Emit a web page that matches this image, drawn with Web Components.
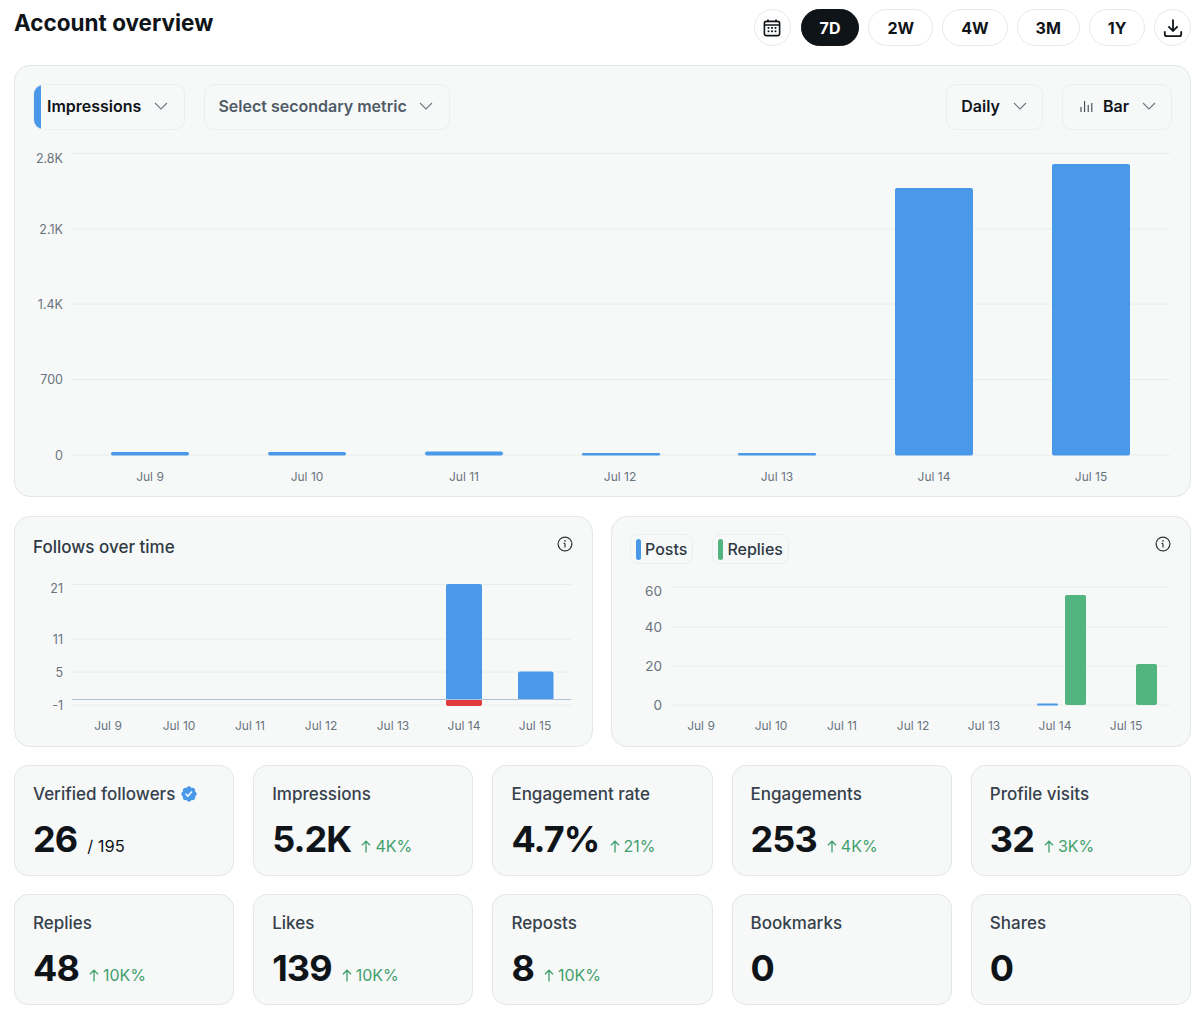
<!doctype html>
<html lang="en">
<head>
<meta charset="utf-8">
<title>Account overview</title>
<style>
  html, body { margin: 0; background: #fff; }
  body { font-family: Inter, "Noto Sans", sans-serif; color: #0f1419; }
</style>
</head>
<body>
<account-overview></account-overview>

<script>
const BLUE = "#4a99e9";
const GREEN = "#52b57f";
const RED = "#e0393e";

const ICONS = {
  calendar: `<svg width="20" height="20" viewBox="0 0 20 20" fill="none" stroke="#0f1419" stroke-width="1.6"><rect x="2.4" y="3.4" width="15.2" height="14.2" rx="2"/><path d="M2.4 7h15.2M6 1.6v2.6M14 1.6v2.6"/><g fill="#0f1419" stroke="none"><rect x="5.6" y="9" width="1.8" height="1.8"/><rect x="9.1" y="9" width="1.8" height="1.8"/><rect x="12.6" y="9" width="1.8" height="1.8"/><rect x="5.6" y="12.4" width="1.8" height="1.8"/><rect x="9.1" y="12.4" width="1.8" height="1.8"/><rect x="12.6" y="12.4" width="1.8" height="1.8"/></g></svg>`,
  download: `<svg width="20" height="20" viewBox="0 0 20 20" fill="none" stroke="#0f1419" stroke-width="1.8"><path d="M10 1.6v11.2M5.4 8.4l4.6 4.6 4.6-4.6M1.8 13.2v3a2 2 0 0 0 2 2h12.4a2 2 0 0 0 2-2v-3"/></svg>`,
  chevron: `<svg width="14" height="8" viewBox="0 0 14 8" fill="none" stroke="#6b7882" stroke-width="1.1"><path d="M1 1l6 6 6-6"/></svg>`,
  bars: `<svg width="13" height="13" viewBox="0 0 13 13" fill="none" stroke="#3a444d" stroke-width="1.1"><path d="M1 7v5M4.6 1v11M8.2 5v7M11.8 3v9"/></svg>`,
  info: `<svg width="16" height="16" viewBox="0 0 16 16" fill="none" stroke="#2f3336" stroke-width="1.2"><circle cx="8" cy="8" r="6.9"/><path d="M8 7.4v4M6.6 7.4H8"/><circle cx="8" cy="4.9" r=".8" fill="#2f3336" stroke="none"/></svg>`,
  verified: `<svg width="18" height="18" viewBox="0 0 24 24"><circle cx="12" cy="12" r="7" fill="#fff"/><path fill="${BLUE}" d="M22.25 12c0-1.43-.88-2.67-2.19-3.34.46-1.39.2-2.9-.81-3.91s-2.52-1.27-3.91-.81c-.66-1.31-1.91-2.19-3.34-2.19s-2.67.88-3.33 2.19c-1.4-.46-2.91-.2-3.92.81s-1.26 2.52-.8 3.91c-1.31.67-2.2 1.91-2.2 3.34s.89 2.67 2.2 3.34c-.46 1.39-.21 2.9.8 3.91s2.52 1.26 3.91.81c.67 1.31 1.91 2.19 3.34 2.19s2.68-.88 3.34-2.19c1.39.45 2.9.2 3.91-.81s1.27-2.52.81-3.91c1.31-.67 2.19-1.91 2.19-3.34zm-11.71 4.2L6.8 12.46l1.41-1.42 2.26 2.26 4.8-5.23 1.47 1.36-6.2 6.77z"/></svg>`,
  up: `<svg width="10" height="13" viewBox="0 0 10 13" fill="none" stroke="currentColor" stroke-width="1.3"><path d="M5 12.5V1.2M1 5.2l4-4 4 4"/></svg>`,
};

// chart geometry is kept in page pixels, the viewBox origin maps it onto the card
// a tick is [label, line y, label y if it sits off the line]
const CHARTS = {
  main: {
    box: [15, 130, 1174, 365], x1: 72, x2: 1170, size: 12.5, yRight: 63,
    ticks: [["2.8K", 153.5, 158], ["2.1K", 229], ["1.4K", 304], ["700", 379.5], ["0", 455]],
    days: [150, 307, 464, 620, 777, 934, 1091], dayY: 481,
    bars: [
      [111, 452, 78, 3.5, BLUE], [268, 452, 78, 3.5, BLUE], [425, 451.5, 78, 4, BLUE],
      [582, 453, 78, 2.5, BLUE], [738, 453, 78, 2.5, BLUE],
      [895, 188, 78, 267.5, BLUE], [1052, 164, 78, 291.5, BLUE],
    ],
  },
  follows: {
    box: [15, 570, 577, 176], x1: 72, x2: 571, size: 12.5, yRight: 63,
    ticks: [["21", 584.5, 588], ["11", 639], ["5", 672], ["-1", 705]],
    days: [108, 179, 250, 321, 393, 464, 535], dayY: 730,
    bars: [[446, 584, 36, 116, BLUE], [518, 671.5, 35.5, 28.5, BLUE], [446, 699.5, 36, 6.5, RED]],
    zero: 699.5,
  },
  activity: {
    box: [612, 570, 578, 176], x1: 672, x2: 1170, size: 13.5, yRight: 662,
    ticks: [["60", 587, 591], ["40", 627], ["20", 666], ["0", 705]],
    days: [701, 771, 842, 913, 984, 1055, 1126], dayY: 730,
    bars: [[1037, 703.5, 21, 2, BLUE], [1065, 595, 21, 110, GREEN], [1136, 664, 21, 41, GREEN]],
  },
};

class BarChart extends HTMLElement {
  constructor() {
    super();
    this.attachShadow({ mode: "open" });
  }
  connectedCallback() {
    const c = CHARTS[this.getAttribute("chart")];
    const [bx, by, bw, bh] = c.box;
    const grid = c.ticks.map(([label, y, labelY]) => `
      <line x1="${c.x1}" x2="${c.x2}" y1="${y}" y2="${y}" stroke="#e9ecec"/>
      <text x="${c.yRight}" y="${(labelY || y) + 4.5}" text-anchor="end">${label}</text>`).join("");
    const days = c.days.map((x, i) =>
      `<text class="day" x="${x}" y="${c.dayY}" text-anchor="middle">Jul ${9 + i}</text>`).join("");
    const bars = c.bars.map(([x, y, w, h, fill]) =>
      `<rect x="${x}" y="${y}" width="${w}" height="${h}" rx="${Math.min(2, h / 2)}" fill="${fill}"/>`).join("");
    const zero = c.zero ? `<line x1="${c.x1}" x2="${c.x2}" y1="${c.zero}" y2="${c.zero}" stroke="#b0c0dc"/>` : "";
    this.shadowRoot.innerHTML = `
      <style>
        :host { display: block; height: ${bh}px; }
        svg { display: block; }
        text { font: 400 ${c.size}px Inter, sans-serif; fill: #68737d; }
        text.day { font-size: 12px; }
      </style>
      <svg width="${bw}" height="${bh}" viewBox="${bx} ${by} ${bw} ${bh}">${grid}${bars}${zero}${days}</svg>`;
  }
}

class RangePill extends HTMLElement {
  constructor() {
    super();
    this.attachShadow({ mode: "open" }).innerHTML = `
      <style>
        :host {
          display: flex; align-items: center; justify-content: center;
          box-sizing: border-box; height: 37px; min-width: 37px; padding: 0 18px;
          border: 1px solid #e6e9ea; border-radius: 19px;
          font-size: 16px; font-weight: 700; color: #0f1419;
        }
        :host([active]) { background: #0f1419; border-color: #0f1419; color: #fff; }
        :host([round]) { padding: 0; width: 37px; }
        ::slotted(svg) { display: block; }
      </style>
      <slot></slot>`;
  }
}

class MetricSelect extends HTMLElement {
  constructor() {
    super();
    this.attachShadow({ mode: "open" }).innerHTML = `
      <style>
        :host {
          display: inline-flex; align-items: center; position: relative; overflow: hidden;
          box-sizing: border-box; height: 46px; padding: 0 15px 2px 14px;
          border: 1px solid #eceff0; border-radius: 10px;
          font-size: 16px; font-weight: 600; color: #0f1419;
        }
        :host([stripe]), :host([muted]) { padding-left: 13px; padding-right: 16px; }
        :host([muted]) { color: #4f5b66; }
        :host([stripe])::before {
          content: ""; position: absolute; left: -1px; top: -1px; bottom: -1px; width: 8px;
          background: ${BLUE};
        }
        .chevron { margin-left: 13px; display: flex; }
        :host([muted]) .chevron { margin-left: 12px; }
        ::slotted(svg) { margin: 0 10px 0 3px; }
      </style>
      <slot></slot><span class="chevron">${ICONS.chevron}</span>`;
  }
}

class LegendChip extends HTMLElement {
  constructor() {
    super();
    this.attachShadow({ mode: "open" }).innerHTML = `
      <style>
        :host {
          display: inline-flex; align-items: center; gap: 4px;
          box-sizing: border-box; height: 30px; padding: 0 5px; margin-top: -1px;
          border: 1px solid #eceff0; border-radius: 8px;
          font-size: 16px; font-weight: 500; color: #2f3a44;
        }
        i { width: 5px; height: 21px; border-radius: 3px; background: var(--chip); }
      </style>
      <i></i><slot></slot>`;
  }
}

class ChartCard extends HTMLElement {
  constructor() {
    super();
    this.attachShadow({ mode: "open" }).innerHTML = `
      <style>
        :host {
          display: block; box-sizing: border-box; padding: 18px 0 0;
          background: #f7f9f9; border: 1px solid #e3e7e8; border-radius: 16px;
        }
        .head {
          display: flex; justify-content: space-between; align-items: flex-start;
          height: 35px; padding: 0 19px 0 18px;
          font-size: 17px; line-height: 24px; font-weight: 500; color: #2f3a44;
        }
        .legend { display: flex; gap: 19px; }
        .info { display: flex; margin-top: 1px; }
        :host([plain]) .head { display: none; }
      </style>
      <div class="head"><div class="legend"><slot name="title"></slot></div><span class="info">${ICONS.info}</span></div>
      <slot></slot>`;
  }
}

class StatCard extends HTMLElement {
  constructor() {
    super();
    this.attachShadow({ mode: "open" }).innerHTML = `
      <style>
        :host {
          display: block; box-sizing: border-box; height: 111px; padding: 16px 18px 0;
          background: #f7f9f9; border: 1px solid #e3e7e8; border-radius: 14px;
        }
        .label {
          display: flex; align-items: center; gap: 5px; height: 24px;
          font-size: 17px; font-weight: 500; color: #36414b;
        }
        .row { display: flex; align-items: baseline; gap: 10px; margin-top: 10px; }
        .value { font-size: 36px; line-height: 46px; font-weight: 700; color: #0f1419; letter-spacing: -.9px; }
        .note { font-size: 16.5px; color: #0f1419; }
        .delta { display: flex; align-items: baseline; gap: 4px; font-size: 16px; color: #3f9f6c; }
        .delta svg { align-self: center; }
        span:empty { display: none; }
      </style>
      <div class="label"><slot></slot><slot name="badge"></slot></div>
      <div class="row"><span class="value"></span><span class="note"></span><span class="delta"></span></div>`;
  }
  connectedCallback() {
    const root = this.shadowRoot;
    root.querySelector(".value").textContent = this.getAttribute("value");
    root.querySelector(".note").textContent = this.getAttribute("note") || "";
    const delta = this.getAttribute("delta");
    if (delta) root.querySelector(".delta").innerHTML = ICONS.up + "<b style='font-weight:400'>" + delta + "</b>";
  }
}

class AccountOverview extends HTMLElement {
  constructor() {
    super();
    this.attachShadow({ mode: "open" }).innerHTML = `
      <style>
        :host { display: block; padding: 9px 9px 0 14px; }
        header { display: flex; justify-content: space-between; height: 37px; margin: 0 -.4px 19px 0; }
        h1 { margin: 0; font-size: 22.5px; line-height: 27px; font-weight: 700; color: #0f1419; }
        .ranges { display: flex; gap: 9px; }
        .ranges range-pill:first-child { margin-right: 1px; }
        .main { height: 432px; margin-bottom: 19px; }
        .toolbar { display: flex; justify-content: space-between; padding: 0 18px; }
        .group { display: flex; gap: 19px; }
        .pair { display: grid; grid-template-columns: 1fr 1fr; gap: 18px; margin-bottom: 18px; }
        .pair chart-card { height: 231px; }
        .stats { display: grid; grid-template-columns: repeat(5, 1fr); column-gap: 19px; row-gap: 18px; }
      </style>
      <header>
        <h1>Account overview</h1>
        <nav class="ranges">
          <range-pill round>${ICONS.calendar}</range-pill>
          <range-pill active>7D</range-pill>
          <range-pill>2W</range-pill>
          <range-pill>4W</range-pill>
          <range-pill>3M</range-pill>
          <range-pill>1Y</range-pill>
          <range-pill round>${ICONS.download}</range-pill>
        </nav>
      </header>

      <chart-card class="main" plain>
        <div class="toolbar">
          <div class="group">
            <metric-select stripe>Impressions</metric-select>
            <metric-select muted>Select secondary metric</metric-select>
          </div>
          <div class="group">
            <metric-select>Daily</metric-select>
            <metric-select>${ICONS.bars}Bar</metric-select>
          </div>
        </div>
        <bar-chart chart="main"></bar-chart>
      </chart-card>

      <section class="pair">
        <chart-card>
          <span slot="title">Follows over time</span>
          <bar-chart chart="follows"></bar-chart>
        </chart-card>
        <chart-card>
          <legend-chip slot="title" style="--chip:${BLUE}">Posts</legend-chip>
          <legend-chip slot="title" style="--chip:${GREEN}">Replies</legend-chip>
          <bar-chart chart="activity"></bar-chart>
        </chart-card>
      </section>

      <section class="stats">
        <stat-card value="26" note="/ 195">Verified followers<span slot="badge" style="display:flex">${ICONS.verified}</span></stat-card>
        <stat-card value="5.2K" delta="4K%">Impressions</stat-card>
        <stat-card value="4.7%" delta="21%">Engagement rate</stat-card>
        <stat-card value="253" delta="4K%">Engagements</stat-card>
        <stat-card value="32" delta="3K%">Profile visits</stat-card>
        <stat-card value="48" delta="10K%">Replies</stat-card>
        <stat-card value="139" delta="10K%">Likes</stat-card>
        <stat-card value="8" delta="10K%">Reposts</stat-card>
        <stat-card value="0">Bookmarks</stat-card>
        <stat-card value="0">Shares</stat-card>
      </section>`;
  }
}

customElements.define("bar-chart", BarChart);
customElements.define("range-pill", RangePill);
customElements.define("metric-select", MetricSelect);
customElements.define("legend-chip", LegendChip);
customElements.define("chart-card", ChartCard);
customElements.define("stat-card", StatCard);
customElements.define("account-overview", AccountOverview);
</script>
</body>
</html>
